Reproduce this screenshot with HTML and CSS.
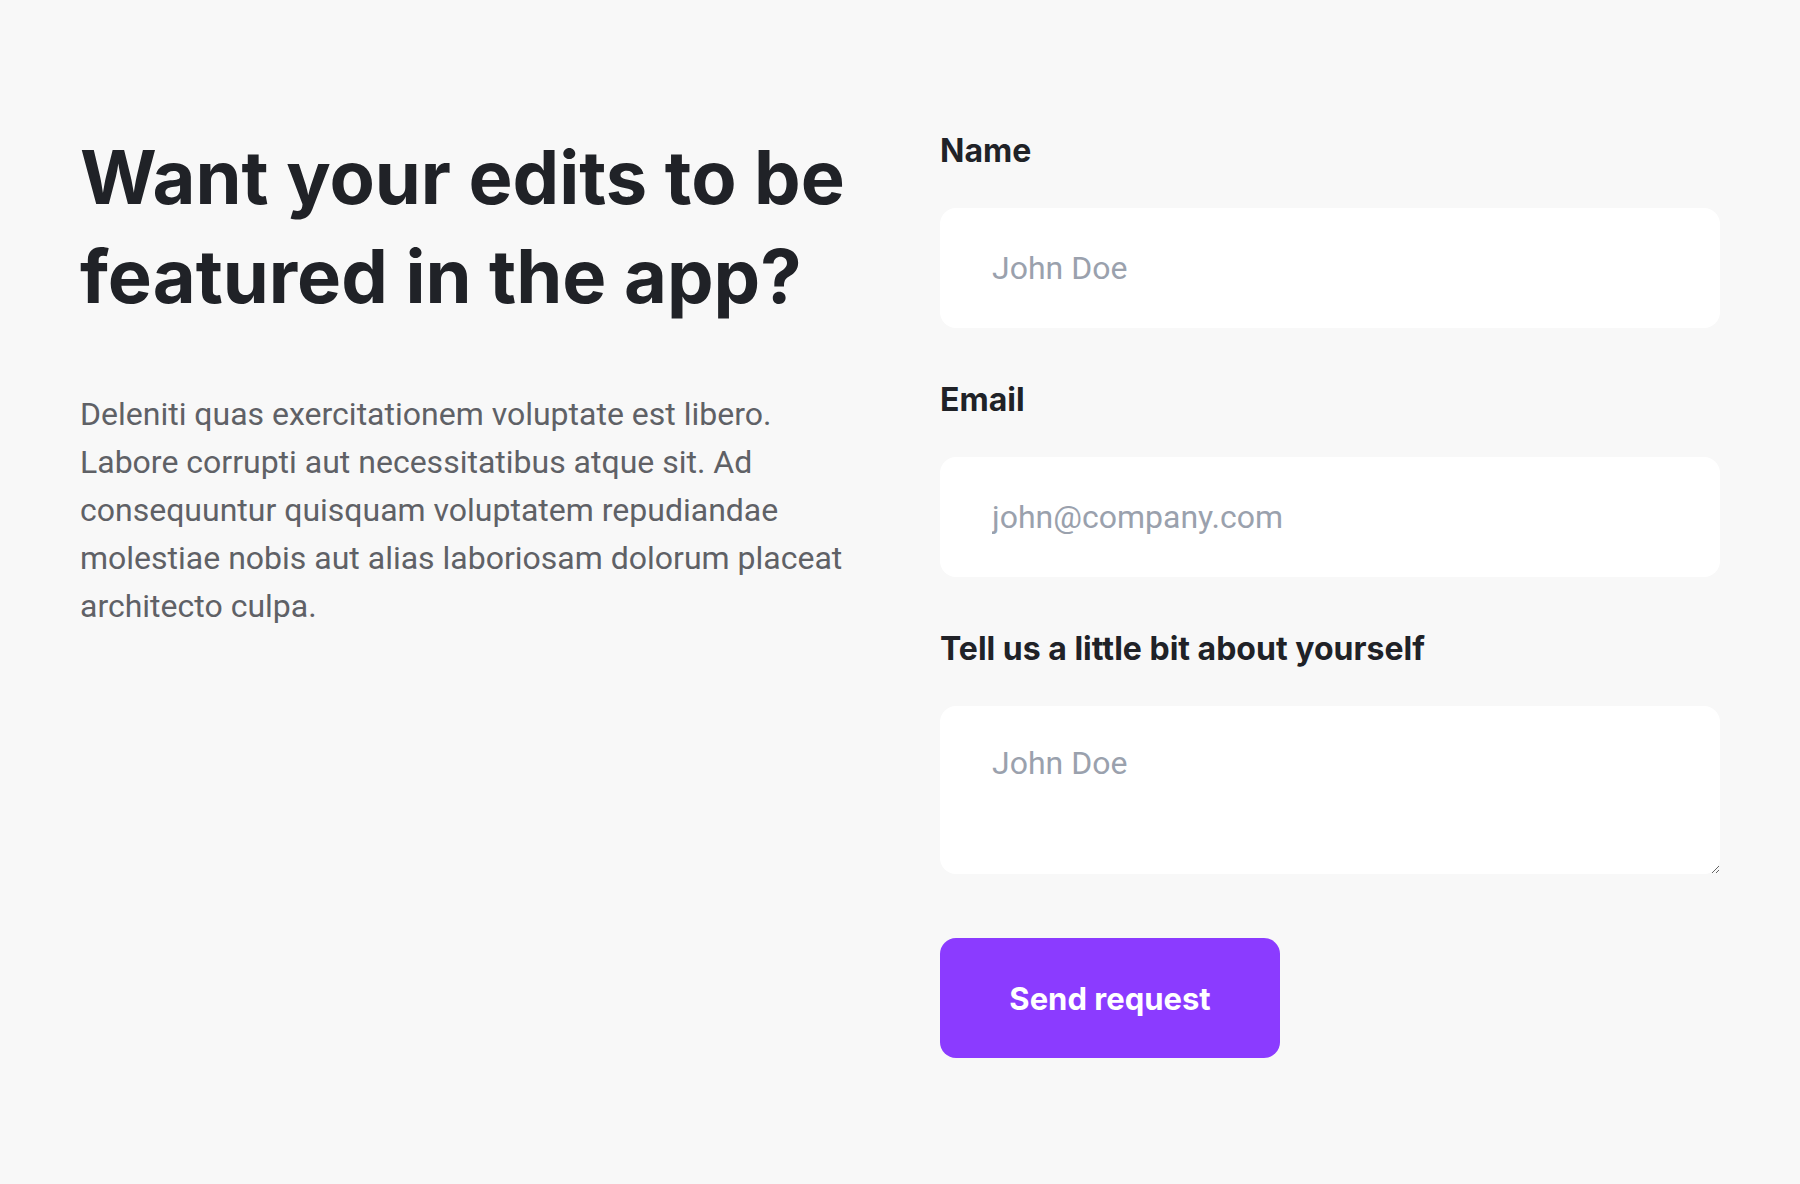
FILE: index.html
```html
<!DOCTYPE html>
<html lang="en">
<head>
<meta charset="utf-8">
<title>Want your edits to be featured in the app?</title>
<link rel="stylesheet" href="styles.css">
</head>
<body>
<main class="section">
  <div class="intro">
    <h1 class="title">Want your edits to be featured in the app?</h1>
    <p class="lead">Deleniti quas exercitationem voluptate est libero. Labore corrupti aut necessitatibus atque sit. Ad consequuntur quisquam voluptatem repudiandae molestiae nobis aut alias laboriosam dolorum placeat architecto culpa.</p>
  </div>
  <form class="form">
    <div class="field">
      <label class="label" for="name">Name</label>
      <input class="input" id="name" type="text" placeholder="John Doe">
    </div>
    <div class="field">
      <label class="label" for="email">Email</label>
      <input class="input" id="email" type="email" placeholder="john@company.com">
    </div>
    <div class="field">
      <label class="label" for="about">Tell us a little bit about yourself</label>
      <textarea class="textarea" id="about" placeholder="John Doe"></textarea>
    </div>
    <button class="button" type="button">Send request</button>
  </form>
</main>
</body>
</html>
```

FILE: styles.css
```css
* { box-sizing: border-box; }

html, body {
  margin: 0;
  padding: 0;
  background: #f8f8f8;
}

body {
  font-family: Roboto, "Liberation Sans", sans-serif;
  color: #202227;
}

.section {
  display: grid;
  grid-template-columns: 1fr 1fr;
  column-gap: 80px;
  padding: 128px 80px 0;
  min-height: 1184px;
  align-items: start;
}

.title {
  margin: 0;
  font-family: Inter, "Open Sans", sans-serif;
  font-weight: 700;
  font-size: 74px;
  line-height: 99px;
  color: #202227;
}

.lead {
  margin: 64px 0 0;
  font-family: Roboto, sans-serif;
  font-size: 32px;
  line-height: 48px;
  color: #5f6166;
}

.form {
  display: flex;
  flex-direction: column;
  gap: 54px;
  padding-top: 5px;
}

.field {
  display: flex;
  flex-direction: column;
}

.label {
  display: block;
  margin-bottom: 39px;
  font-family: Inter, sans-serif;
  font-weight: 700;
  font-size: 32px;
  line-height: 36px;
  color: #202227;
}

.input,
.textarea {
  width: 100%;
  border: none;
  outline: none;
  background: #ffffff;
  border-radius: 16px;
  font-family: Roboto, sans-serif;
  font-size: 32px;
  color: #202227;
}

.input {
  height: 120px;
  padding: 0 52px;
}

.textarea {
  height: 168px;
  padding: 35px 52px;
  line-height: 44px;
  resize: vertical;
}

.input::placeholder,
.textarea::placeholder {
  color: #9aa1ad;
  opacity: 1;
}

.button {
  margin-top: 10px;
  width: 340px;
  height: 120px;
  border: none;
  border-radius: 16px;
  background: #8b3bff;
  color: #ffffff;
  font-family: Inter, sans-serif;
  font-weight: 700;
  font-size: 31px;
  cursor: pointer;
}
```
